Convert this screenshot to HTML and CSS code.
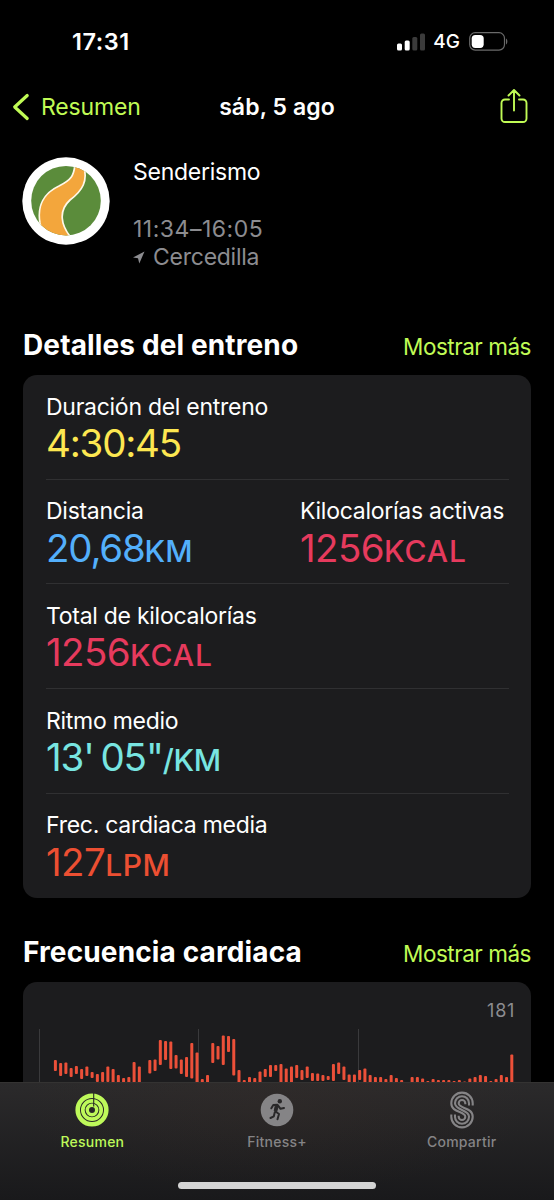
FILE: index.html
```html
<!DOCTYPE html>
<html lang="es">
<head>
    <meta charset="UTF-8">
    <meta name="viewport" content="width=device-width, initial-scale=1.0">
    <title>Senderismo - sáb, 5 ago</title>
    <link rel="stylesheet" href="styles.css">
</head>
<body>
    <header class="status-bar">
        <span class="clock">17:31</span>
        <div class="status-icons">
            <svg class="signal" width="28" height="18" viewBox="0 0 28 18">
                <rect x="0" y="10.5" width="5" height="7" rx="1.5" fill="#fff"/>
                <rect x="7.7" y="7.5" width="5" height="10" rx="1.5" fill="#fff"/>
                <rect x="15.3" y="4" width="5" height="13.5" rx="1.5" fill="#3b3b3b"/>
                <rect x="23" y="0.5" width="5" height="17" rx="1.5" fill="#3b3b3b"/>
            </svg>
            <span class="network">4G</span>
            <svg class="battery" width="39" height="19" viewBox="0 0 39 19">
                <rect x="0.7" y="0.7" width="34.8" height="17.4" rx="5.5" fill="none" stroke="#6a6a6a" stroke-width="1.2"/>
                <rect x="2.7" y="2.9" width="12" height="13" rx="3.6" fill="#fff"/>
                <path d="M37 6.5c1.8.8 1.8 5.2 0 6z" fill="#6a6a6a"/>
            </svg>
        </div>
    </header>

    <nav class="nav-bar">
        <a class="back">
            <svg width="18" height="28" viewBox="0 0 18 28"><path d="M15.2 2.5 2.7 14l12.5 11.5" fill="none" stroke="currentColor" stroke-width="3.2" stroke-linecap="round" stroke-linejoin="round"/></svg>
            <span>Resumen</span>
        </a>
        <h1 class="nav-title">sáb, 5 ago</h1>
        <svg class="share" width="28" height="35" viewBox="0 0 28 35">
            <path d="M9 10.500H5A3.500 3.500 0 0 0 1.500 14v15.500A3.500 3.500 0 0 0 5 33h18a3.500 3.500 0 0 0 3.500-3.500V14a3.500 3.500 0 0 0-3.500-3.500h-4M14 21.500V1M8.500 6.500 14 1l5.500 5.500" fill="none" stroke="currentColor" stroke-width="1.9" stroke-linecap="round" stroke-linejoin="round"/>
        </svg>
    </nav>

    <main>
        <section class="workout">
            <svg class="app-logo" width="88" height="88" viewBox="0 0 88 88">
                <circle cx="44" cy="44" r="43.7" fill="#fff"/>
                <clipPath id="disc"><circle cx="44" cy="43.7" r="34.8"/></clipPath>
                <g clip-path="url(#disc)">
                    <rect width="88" height="88" fill="#5b8c3b"/>
                    <path d="M53 7C52 19 49 23 37 29C22 36 15 49 18 66L22 84H52C37 68 37 53 48 43C60 34 67 24 61 7Z" fill="#f3a63c" stroke="#fff8e8" stroke-width="1.7"/>
                </g>
            </svg>
            <div class="workout-info">
                <p class="workout-name">Senderismo</p>
                <p class="workout-time">11:34–16:05</p>
                <p class="workout-place">
                    <svg width="12" height="13" viewBox="0 0 12 13"><path d="M11.5.5 0 6.5l5 .8 1.300 5.300z" fill="currentColor"/></svg>
                    <span>Cercedilla</span>
                </p>
            </div>
        </section>

        <section>
            <div class="section-head">
                <h2>Detalles del entreno</h2>
                <a class="more">Mostrar más</a>
            </div>
            <div class="card details">
                <div class="row">
                    <div class="metric">
                        <span class="label">Duración del entreno</span>
                        <span class="value yellow">4:30:45</span>
                    </div>
                </div>
                <div class="row">
                    <div class="metric">
                        <span class="label">Distancia</span>
                        <span class="value blue">20,68<small>KM</small></span>
                    </div>
                    <div class="metric">
                        <span class="label">Kilocalorías activas</span>
                        <span class="value pink">1256<small>KCAL</small></span>
                    </div>
                </div>
                <div class="row">
                    <div class="metric">
                        <span class="label">Total de kilocalorías</span>
                        <span class="value pink">1256<small>KCAL</small></span>
                    </div>
                </div>
                <div class="row">
                    <div class="metric">
                        <span class="label">Ritmo medio</span>
                        <span class="value cyan">13' 05"<small>/KM</small></span>
                    </div>
                </div>
                <div class="row">
                    <div class="metric">
                        <span class="label">Frec. cardiaca media</span>
                        <span class="value orange">127<small>LPM</small></span>
                    </div>
                </div>
            </div>
        </section>

        <section>
            <div class="section-head heart-head">
                <h2>Frecuencia cardiaca</h2>
                <a class="more">Mostrar más</a>
            </div>
            <div class="card heart-card">
                <span class="max-rate">181</span>
                <svg class="chart" id="heartChart" width="508" height="80" viewBox="0 0 508 80">
                    <path d="M16.5 0v80M175.5 0v80M335.5 0v80" stroke="#3a3a3c" stroke-width="1"/>
                </svg>
            </div>
        </section>
    </main>

    <footer class="tab-bar">
        <a class="tab active">
            <svg width="34" height="38" viewBox="0 0 34 38">
                <g fill="none" stroke="currentColor">
                    <circle cx="17" cy="19" r="14.3" stroke-width="4.6"/>
                    <circle cx="17" cy="19" r="9.2" stroke-width="3.7"/>
                    <circle cx="17" cy="19" r="4.7" stroke-width="3.4"/>
                </g>
                <path d="M18.7 2v13.5" stroke="#292726" stroke-width="1.1"/>
            </svg>
            <span>Resumen</span>
        </a>
        <a class="tab">
            <svg width="34" height="38" viewBox="0 0 34 38">
                <circle cx="17" cy="19" r="16.3" fill="currentColor"/>
                <circle cx="19.8" cy="10.2" r="2.2" fill="#292829"/>
                <path d="M11.3 17.3l2-3.3 4-.2M15.5 20.5l3.5 2.5-1.5 5.2M14.8 21.3l-1 4-3.3 1.7M18.3 14.800l2.200 3 3.500-.8" fill="none" stroke="#292829" stroke-width="2" stroke-linecap="round" stroke-linejoin="round"/>
                <path d="M15.5 13.5l3 .6-1.800 6.600-2.500-.8z" fill="#292829" stroke="#292829"/>
            </svg>
            <span>Fitness+</span>
        </a>
        <a class="tab">
            <svg width="34" height="38" viewBox="0 0 34 38">
                <g fill="none" stroke="currentColor" stroke-width="2.1">
                    <path d="M27.7 14.500v-2.200a10.700 10.700 0 0 0-21.400 0C6.300 22 20.300 20 20.300 25.700a3.300 3.300 0 0 1-6.600 0v-1"/>
                    <path d="M24 14.500v-2.200a7 7 0 0 0-14 0C10 19.500 24 18.500 24 25.700a7 7 0 0 1-14 0v-2.200"/>
                    <path d="M20.300 13.300v-1a3.300 3.300 0 0 0-6.600 0C13.700 18 27.700 16 27.700 25.700a10.700 10.700 0 0 1-21.400 0v-2.200"/>
                </g>
            </svg>
            <span>Compartir</span>
        </a>
        <div class="home-indicator"></div>
    </footer>

    <script>
        // [top, bottom] of every bar in px, null = no reading
        const readings = [
            [31, 42], [34, 47], [33.5, 45], [39, 48], [37, 45], [40, 50], [37.5, 47], [43, 49], [45, 53], [43, 53], [37.5, 53],
            [40, 70], [46, 70], [49, 70], [48, 70], [33, 70], [37.5, 70], null, [31, 44.5], [30.5, 42], [11, 36], [12, 31],
            [12.5, 40], [26, 39.5], [30.5, 45], [28, 48], [14, 49.5], [23.5, 70], [50, 70], [46, 70], [14, 34], [17, 30.5],
            [6.5, 36], [7, 23], [10, 46.5], [41, 70], [51, 70], [48, 70], [49, 70], [42.5, 70], [40, 48], [36, 48], [36, 42],
            [35, 70], [39.5, 70], [37.5, 70], [36, 49], [41, 51], [37.5, 49], [44, 52], [44.5, 52], [46, 52], [47, 51],
            [35, 52], [33.5, 45], [37.5, 51], [45.5, 70], [45.5, 70], [41, 51], [39.5, 70], [46, 70], [48, 70], [48, 70],
            [50, 70], [46, 70], [49, 70], [51, 70], [53, 70], [48, 70], [48, 70], [49.5, 70], [52, 70], [50, 70], [51, 70],
            [51, 70], [51, 70], [52, 70], [51, 70], [52.5, 70], [49.5, 70], [48, 70], [46, 70], [47, 70], [52, 70], [50, 70],
            [46, 70], [48, 70], [25.5, 70]
        ];
        const chart = document.getElementById('heartChart');

        readings.forEach((reading, i) => {
            if (!reading) return;
            const bar = document.createElementNS('http://www.w3.org/2000/svg', 'rect');
            bar.setAttribute('x', 30.9 + i * 5.246);
            bar.setAttribute('y', reading[0]);
            bar.setAttribute('width', 3);
            bar.setAttribute('height', reading[1] - reading[0]);
            bar.setAttribute('rx', 1);
            bar.setAttribute('class', 'bar');
            chart.appendChild(bar);
        });
    </script>
</body>
</html>
```
FILE: styles.css
```css
* {
    margin: 0;
    padding: 0;
    box-sizing: border-box;
}

body {
    height: 1200px;
    overflow: hidden;
    background: #000;
    color: #fff;
    font-family: Inter, "Liberation Sans", sans-serif;
    font-size: 23px;
}

svg {
    display: block;
}

.status-bar {
    display: flex;
    justify-content: space-between;
    align-items: center;
    height: 83px;
    padding: 0 46px 0 72px;
}

.clock {
    font-size: 23.5px;
    font-weight: 600;
    letter-spacing: 0.5px;
}

.status-icons {
    display: flex;
    align-items: center;
}

.network {
    margin: 0 9px 0 8px;
    font-size: 19px;
    font-weight: 500;
}

.nav-bar {
    display: grid;
    grid-template-columns: 1fr auto 1fr;
    align-items: center;
    height: 48px;
    padding: 0 12px;
}

.back {
    display: flex;
    align-items: center;
    gap: 11px;
    color: #c0fb55;
    letter-spacing: -0.15px;
}

.nav-title {
    font-size: 23px;
    font-weight: 600;
    letter-spacing: 0.1px;
}

.share {
    justify-self: end;
    margin: -2px 14px 0 0;
    color: #c0fb55;
}

.workout {
    display: flex;
    gap: 23px;
    height: 187px;
    padding: 26px 22px 0;
}

.workout-info {
    line-height: 28px;
    letter-spacing: -0.25px;
}

.workout-name {
    margin: 1px 0 29px;
}

.workout-time,
.workout-place {
    color: #8c8c90;
}

.workout-time {
    letter-spacing: 0.5px;
}

.workout-place {
    display: flex;
    align-items: center;
    gap: 8px;
}

.section-head {
    display: flex;
    justify-content: space-between;
    align-items: baseline;
    height: 57px;
    padding: 9px 23px 0;
}

.section-head h2 {
    font-size: 28px;
    font-weight: 700;
    line-height: 36px;
    letter-spacing: 0.13px;
}

.more {
    color: #c0fb55;
    font-size: 22.5px;
    letter-spacing: -0.48px;
}

.card {
    margin: 0 23px;
    border-radius: 14px;
    background: #1c1c1e;
}

.details {
    height: 523px;
    padding: 0 22px 0 23px;
}

.row {
    display: grid;
    grid-template-columns: 254px 1fr;
    height: 104.7px;
    padding-top: 17.6px;
    border-bottom: 1px solid #303032;
}

.row:last-child {
    border-bottom: 0;
}

.metric {
    display: flex;
    flex-direction: column;
    white-space: nowrap;
}

.label {
    line-height: 28px;
    letter-spacing: -0.27px;
}

.value {
    margin-top: -0.6px;
    font-size: 38.5px;
    line-height: 46px;
    letter-spacing: -0.6px;
}

.value small {
    font-size: 30px;
    font-weight: 500;
    letter-spacing: 0;
}

.yellow {
    color: #fde751;
    letter-spacing: -1.2px;
}

.blue {
    color: #53affb;
    letter-spacing: -1.2px;
}

.pink {
    color: #e63a5d;
}

.pink small {
    letter-spacing: 0.9px;
}

.cyan {
    color: #78e5e1;
    letter-spacing: -1.1px;
    word-spacing: -3px;
}

.cyan small {
    letter-spacing: -0.4px;
}

.orange {
    color: #ec4f32;
}

.orange small {
    letter-spacing: 0.6px;
}

.heart-head {
    height: 84px;
    padding-top: 36px;
}

.heart-card {
    height: 240px;
    padding-top: 18px;
}

.max-rate {
    display: block;
    padding-right: 16px;
    color: #8c8c90;
    font-size: 18px;
    line-height: 22px;
    letter-spacing: 0.7px;
    text-align: right;
}

.chart {
    margin-top: 7px;
}

.bar {
    fill: #ec5039;
}

.tab-bar {
    position: fixed;
    right: 0;
    bottom: 0;
    left: 0;
    display: flex;
    height: 118px;
    padding-top: 8px;
    border-top: 1px solid #343332;
    background: radial-gradient(ellipse at 50% 20%, rgba(64, 48, 40, 0.22), transparent 65%), linear-gradient(#2b2a2b, #19191b);
}

.tab {
    display: flex;
    flex: 1;
    flex-direction: column;
    align-items: center;
    color: #858486;
    font-size: 14px;
    font-weight: 500;
    line-height: 20px;
    letter-spacing: 0.25px;
}

.tab span {
    margin-top: 3px;
}

.tab.active {
    color: #bef95a;
}

.home-indicator {
    position: absolute;
    bottom: 11px;
    left: 178px;
    width: 198px;
    height: 7px;
    border-radius: 4px;
    background: #d4d4d4;
}
```
